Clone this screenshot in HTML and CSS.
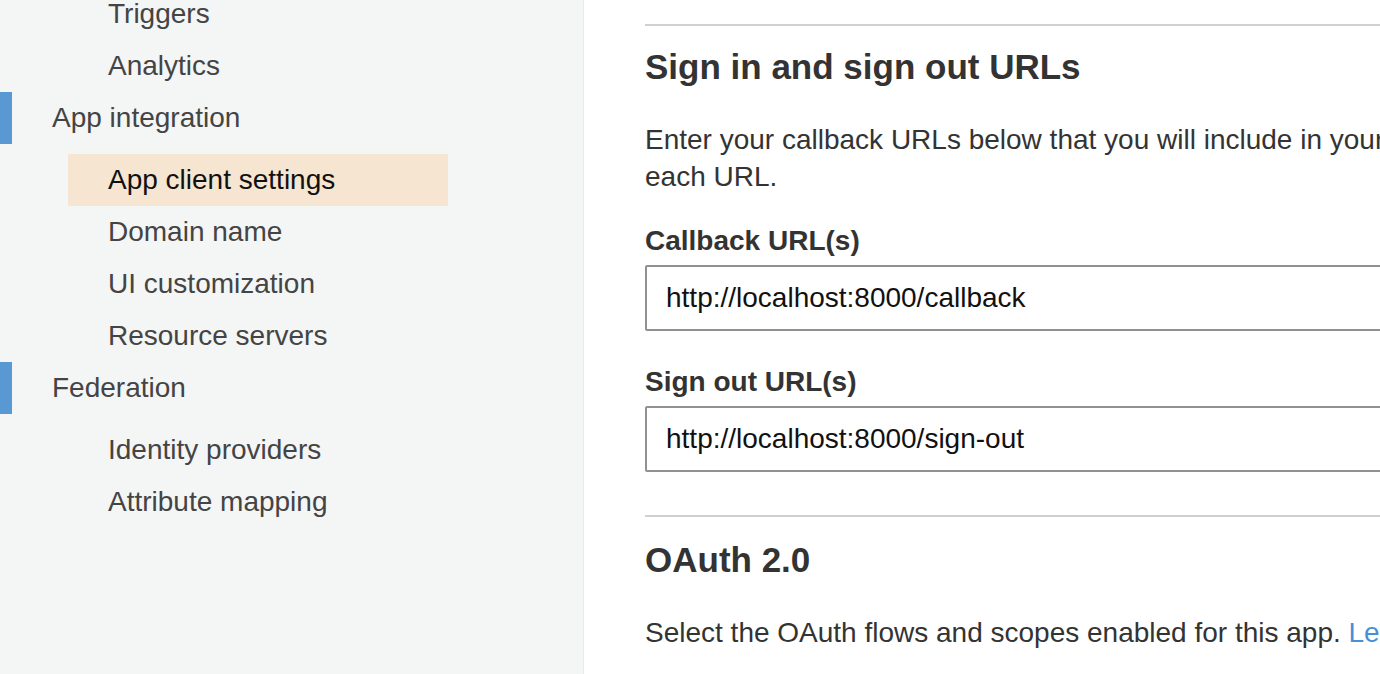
FILE: index.html
```html
<!DOCTYPE html>
<html lang="en">
<head>
<meta charset="utf-8">
<title>App client settings</title>
<link rel="stylesheet" href="styles.css">
</head>
<body>
<aside class="sidebar">
  <ul class="nav">
    <li class="nav-sub">Triggers</li>
    <li class="nav-sub">Analytics</li>
    <li class="nav-group">
      <div class="nav-title">App integration</div>
      <ul class="nav-list">
        <li class="nav-sub active">App client settings</li>
        <li class="nav-sub">Domain name</li>
        <li class="nav-sub">UI customization</li>
        <li class="nav-sub">Resource servers</li>
      </ul>
    </li>
    <li class="nav-group">
      <div class="nav-title">Federation</div>
      <ul class="nav-list">
        <li class="nav-sub">Identity providers</li>
        <li class="nav-sub">Attribute mapping</li>
      </ul>
    </li>
  </ul>
</aside>
<main class="main">
  <div class="content">
    <section class="section">
      <h2 class="heading">Sign in and sign out URLs</h2>
      <p class="text">Enter your callback URLs below that you will include in your sign in and sign out requests. Each field can contain multiple URLs by entering a comma after<br>each URL.</p>
      <label class="label" for="cb">Callback URL(s)</label>
      <input class="field" id="cb" type="text" value="http://localhost:8000/callback">
      <label class="label label-gap" for="so">Sign out URL(s)</label>
      <input class="field" id="so" type="text" value="http://localhost:8000/sign-out">
    </section>
    <section class="section section-next">
      <h2 class="heading heading-next">OAuth 2.0</h2>
      <p class="text">Select the OAuth flows and scopes enabled for this app. <a class="link" href="#">Learn more about flows and scopes.</a></p>
    </section>
  </div>
</main>
</body>
</html>
```
FILE: styles.css
```css
* { box-sizing: border-box; }

html, body {
  margin: 0;
  padding: 0;
  height: 100%;
}

body {
  display: flex;
  overflow: hidden;
  font-family: "Liberation Sans", Arial, Helvetica, sans-serif;
  font-size: 28px;
  color: #333333;
  background: #ffffff;
}

.sidebar {
  flex: 0 0 584px;
  background: #f4f5f5;
  border-right: 1px solid #e9ebeb;
  height: 100%;
  overflow: hidden;
}

.nav, .nav-list {
  list-style: none;
  margin: 0;
  padding: 0;
}

.nav {
  margin-top: -12px;
}

.nav-title {
  height: 52px;
  line-height: 52px;
  padding-left: 52px;
  color: #444444;
  border-left: 12px solid #5899d4;
  padding-left: 40px;
}

.nav-list {
  margin-top: 10px;
}

.nav-sub {
  height: 52px;
  line-height: 52px;
  padding-left: 108px;
  color: #444444;
  white-space: nowrap;
}

.nav-sub.active {
  color: #111111;
  background: linear-gradient(#f5e5d1, #f5e5d1) no-repeat 68px 0 / 380px 52px;
}

.main {
  flex: 0 0 auto;
  padding: 24px 0 0 61px;
}

.content {
  width: 1400px;
}

.section {
  border-top: 2px solid #d0d0d0;
}

.section-next {
  margin-top: 43px;
}

.heading {
  margin: 20px 0 0;
  font-size: 35px;
  line-height: 42px;
  font-weight: bold;
  color: #333333;
}

.heading-next {
  margin-top: 22px;
}

.text {
  margin: 33px 0 0;
  line-height: 37px;
  color: #333333;
  white-space: nowrap;
}

.label {
  display: block;
  margin-top: 27px;
  line-height: 37px;
  font-weight: bold;
  color: #333333;
}

.label-gap {
  margin-top: 32px;
}

.field {
  display: block;
  width: 100%;
  height: 66px;
  margin-top: 6px;
  padding: 0 0 0 19px;
  border: 2px solid #8e9294;
  border-radius: 2px;
  background: #ffffff;
  font-family: "Liberation Sans", Arial, Helvetica, sans-serif;
  font-size: 28px;
  color: #111111;
  outline: none;
}

.link {
  color: #4a8fd6;
  text-decoration: none;
}
```
